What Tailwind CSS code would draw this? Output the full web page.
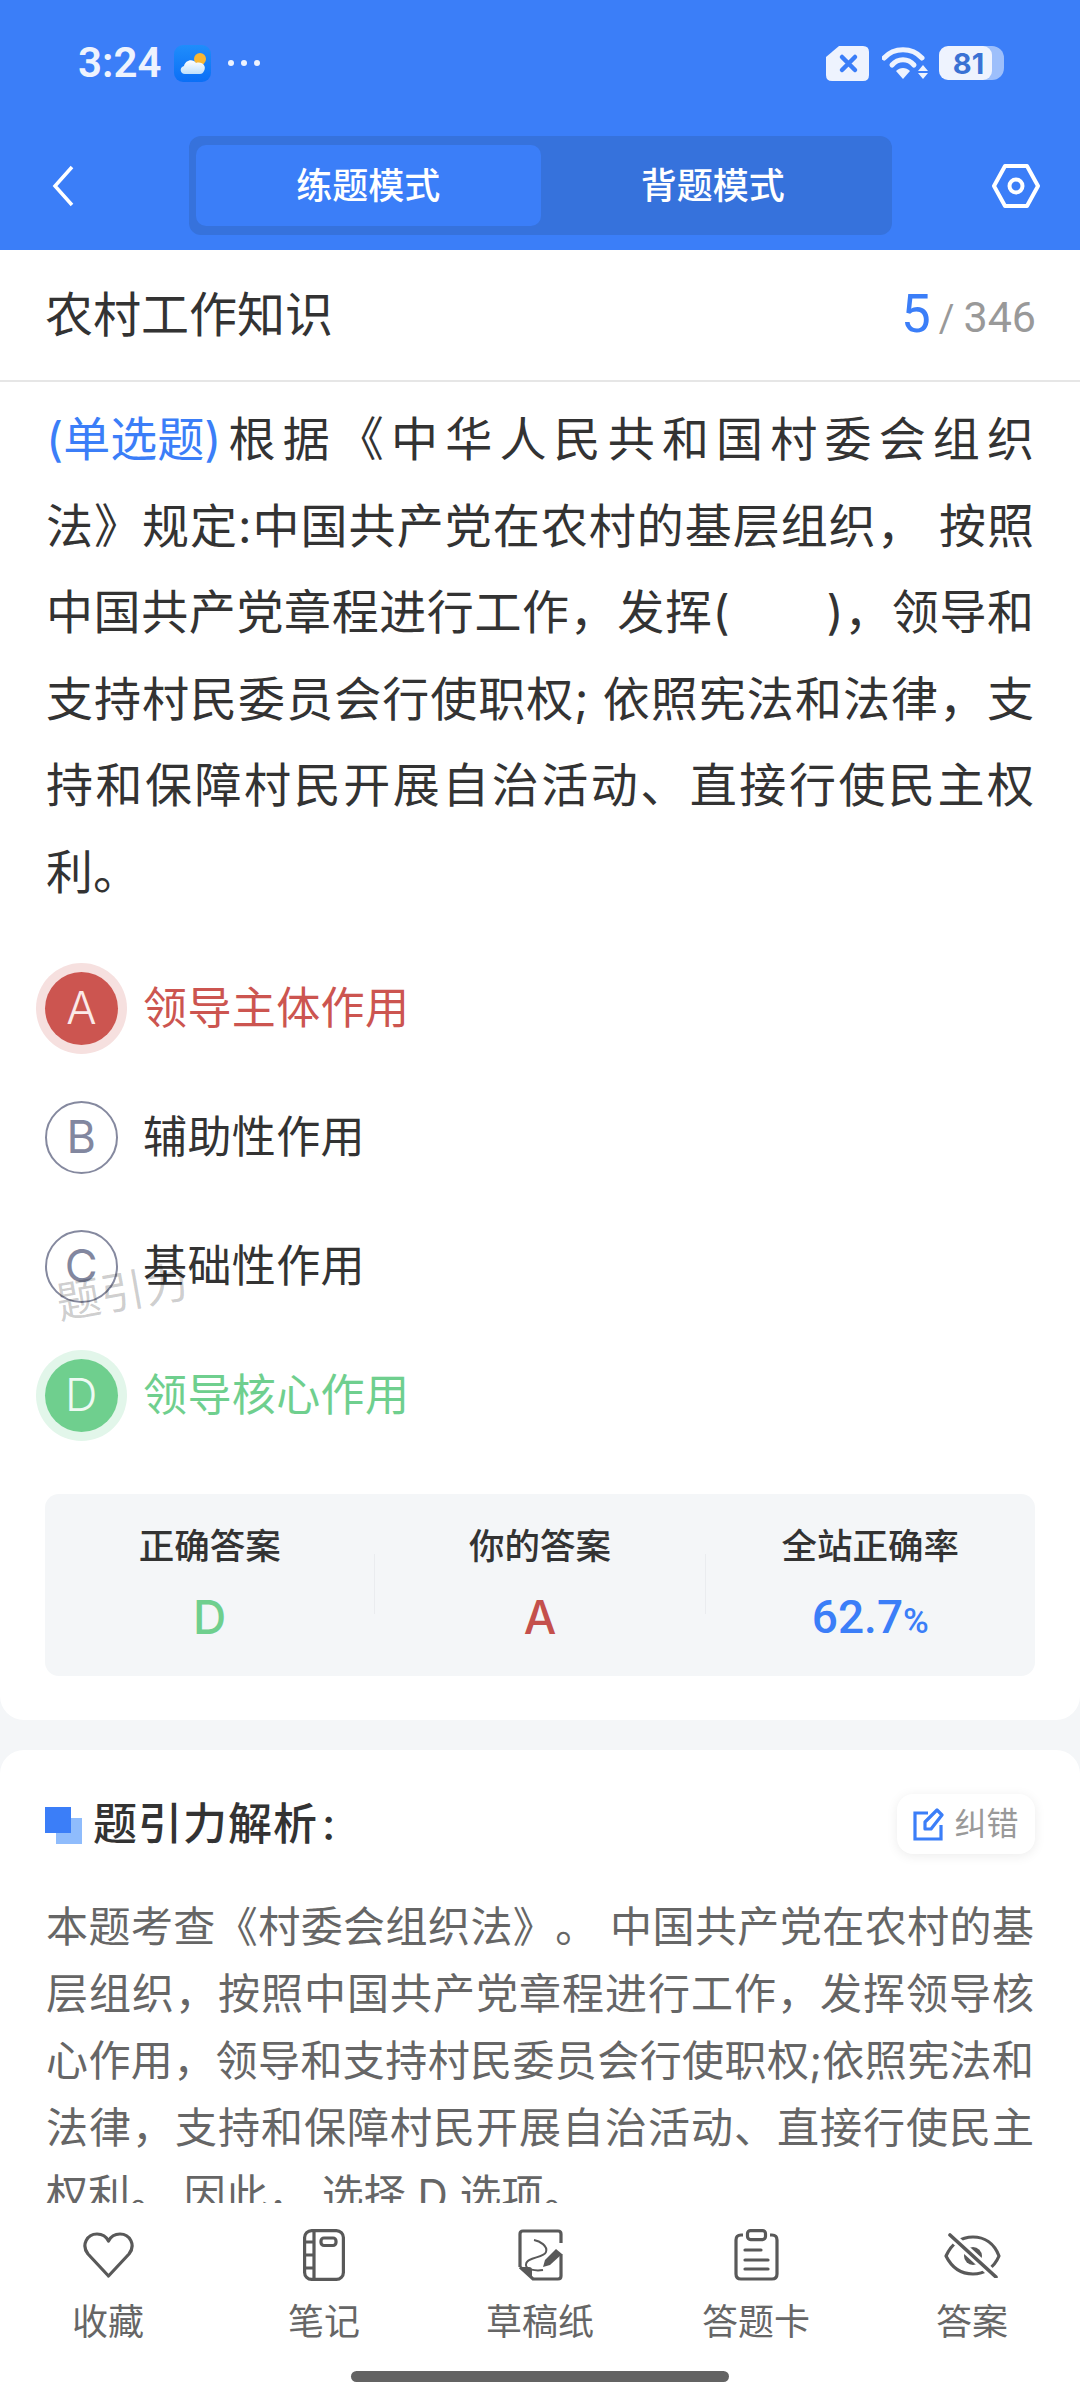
<!DOCTYPE html>
<html lang="zh-CN">
  <head>
    <meta charset="UTF-8" />
    <meta name="viewport" content="width=device-width, initial-scale=1.0" />
    <script src="https://cdn.jsdelivr.net/npm/@tailwindcss/browser@4"></script>
    <title>练题模式</title>
  </head>
  <body class="flex h-[2400px] w-[1080px] flex-col overflow-hidden bg-[#f4f6f8] text-[#333333] [font-family:Inter,'Noto_Sans_CJK_SC',sans-serif]">
    <!-- blue header -->
    <header class="h-[250px] shrink-0 bg-[#3b7ef8]">
      <div class="flex h-[126px] items-center pl-[78px] pr-[76px]">
        <span class="text-[42px] font-semibold leading-none text-[#eef3fe] [font-family:Roboto,sans-serif]">3:24</span>
        <svg class="ml-[13px]" width="37" height="37" viewBox="0 0 37 37">
          <defs>
            <linearGradient id="sky" x1="0" y1="0" x2="0" y2="1">
              <stop offset="0" stop-color="#1f8dfb" />
              <stop offset="1" stop-color="#0b6ff6" />
            </linearGradient>
            <linearGradient id="cloud" x1="0" y1="0" x2="0" y2="1">
              <stop offset="0" stop-color="#ffffff" />
              <stop offset="1" stop-color="#bfe0fb" />
            </linearGradient>
          </defs>
          <rect width="37" height="37" rx="9" fill="url(#sky)" />
          <circle cx="26" cy="14" r="6" fill="#f7b733" />
          <path d="M11 29 C6 29 5 22 10 21 C11 15 19 13 22 18 C28 16 33 21 30 26 C29 28 28 29 26 29 Z" fill="url(#cloud)" />
        </svg>
        <div class="ml-[17px] flex gap-[7px]">
          <span class="size-[6px] rounded-full bg-[#eef3fe]"></span>
          <span class="size-[6px] rounded-full bg-[#eef3fe]"></span>
          <span class="size-[6px] rounded-full bg-[#eef3fe]"></span>
        </div>
        <svg class="ml-auto" width="43" height="35" viewBox="0 0 43 35">
          <path d="M13 0 H37 Q43 0 43 6 V29 Q43 35 37 35 H6 Q0 35 0 29 V11 Z" fill="#eef3fe" />
          <path d="M16 11 L29 24 M29 11 L16 24" stroke="#3b7ef8" stroke-width="4.5" stroke-linecap="round" />
        </svg>
        <svg class="ml-[13px]" width="46" height="34" viewBox="0 0 46 34">
          <path d="M2 12 C12 1 30 1 40 12" fill="none" stroke="#eef3fe" stroke-width="5" stroke-linecap="round" />
          <path d="M10 19 C16 12 26 12 32 19" fill="none" stroke="#eef3fe" stroke-width="5" stroke-linecap="round" />
          <path d="M14 25 C18 21 24 21 28 25 L21 33 Z" fill="#eef3fe" />
          <path d="M41 19 L46 25 H36 Z M36 27 H46 L41 33 Z" fill="#eef3fe" />
        </svg>
        <div class="relative ml-[11px] flex h-[34px] w-[65px] items-center">
          <div class="absolute right-0 h-[34px] w-[24px] rounded-r-[12px] bg-[#9dbffb]"></div>
          <div class="relative flex h-[34px] w-[53px] items-center justify-center rounded-[9px] bg-[#eef3fe] pl-[6px] text-[29px] font-bold leading-none text-[#3a72d4]">81</div>
        </div>
      </div>
      <div class="mt-[10px] flex items-center pl-[52px] pr-[40px]">
        <svg width="22" height="42" viewBox="0 0 22 42">
          <path d="M20 2 L3 21 L20 40" fill="none" stroke="#ffffff" stroke-width="3.5" />
        </svg>
        <div class="ml-[115px] grid h-[99px] w-[703px] grid-cols-2 rounded-[12px] bg-[#3672dc] px-[7px] py-[9px] text-[36px] font-medium text-white">
          <div class="flex items-center justify-center rounded-[10px] bg-[#3b7ef8]">练题模式</div>
          <div class="flex items-center justify-center">背题模式</div>
        </div>
        <svg class="ml-auto" width="48" height="44" viewBox="0 0 48 44">
          <path d="M13 2 H35 L46 22 L35 42 H13 L2 22 Z" fill="none" stroke="#ffffff" stroke-width="4" stroke-linejoin="round" />
          <circle cx="24" cy="22" r="6.5" fill="none" stroke="#ffffff" stroke-width="4" />
        </svg>
      </div>
    </header>

    <!-- question card -->
    <section class="h-[1470px] shrink-0 rounded-b-[24px] bg-white">
      <div class="flex h-[132px] items-center justify-between border-b-2 border-[#e6e6e6] pl-[45px] pr-[44px]">
        <h1 class="text-[48px] font-normal">农村工作知识</h1>
        <div class="flex items-baseline text-[#999999] [font-family:Roboto,sans-serif]">
          <span class="text-[53px] text-[#3b7ef8]">5</span>
          <span class="ml-[8px] text-[38px]">/</span>
          <span class="ml-[9px] text-[43px]">346</span>
        </div>
      </div>

      <div class="px-[46px] pt-[14px] text-[47px] leading-[86.6px] [text-spacing-trim:space-all]">
        <p class="text-justify [text-align-last:justify]">
          <span class="inline-block text-[#3b7ef8]">(单选题)</span>根据《中华人民共和国村委会组织<br />
          法》规定:中国共产党在农村的基层组织， 按照<br />
          中国共产党章程进行工作，发挥(&nbsp;&nbsp;&nbsp;&nbsp;&nbsp;&nbsp;&nbsp;)，领导和<br />
          支持村民委员会行使职权; 依照宪法和法律，支<br />
          持和保障村民开展自治活动、直接行使民主权
        </p>
        <p>利。</p>
      </div>

      <ul class="mt-[28px] text-[44px] tracking-[0.4px]">
        <li class="flex h-[129px] items-center pl-[45px]">
          <span class="flex size-[73px] items-center justify-center rounded-full bg-[#cc5550] text-[45px] font-light text-[#fbe9e8] ring-[9px] ring-[#f6e0df]">A</span>
          <span class="ml-[25px] text-[#cc5550]">领导主体作用</span>
        </li>
        <li class="flex h-[129px] items-center pl-[45px]">
          <span class="flex size-[73px] items-center justify-center rounded-full border-2 border-[#85899f] text-[45px] font-normal text-[#82879f]">B</span>
          <span class="ml-[25px]">辅助性作用</span>
        </li>
        <li class="relative flex h-[129px] items-center pl-[45px]">
          <span class="flex size-[73px] items-center justify-center rounded-full border-2 border-[#85899f] text-[45px] font-normal text-[#82879f]">C</span>
          <span class="ml-[25px]">基础性作用</span>
          <span class="absolute left-[56px] top-[68px] -rotate-10 text-[44px] font-normal leading-none text-black/20">题引力</span>
        </li>
        <li class="flex h-[129px] items-center pl-[45px]">
          <span class="flex size-[73px] items-center justify-center rounded-full bg-[#6fcf8e] text-[45px] font-light text-[#eefaf2] ring-[9px] ring-[#e2f6ea]">D</span>
          <span class="ml-[25px] text-[#6fcf8e]">领导核心作用</span>
        </li>
      </ul>

      <div class="mx-[45px] mt-[34px] flex h-[182px] rounded-[14px] bg-[#f4f6f8]">
        <div class="flex-1 pt-[29px] text-center">
          <div class="text-[35.5px] font-medium leading-[48px]">正确答案</div>
          <div class="mt-[21px] text-[46px] font-medium leading-[50px] text-[#6fcf8e]">D</div>
        </div>
        <div class="mt-[60px] h-[60px] w-px bg-[#eaecef]"></div>
        <div class="flex-1 pt-[29px] text-center">
          <div class="text-[35.5px] font-medium leading-[48px]">你的答案</div>
          <div class="mt-[21px] text-[46px] font-medium leading-[50px] text-[#c4504c]">A</div>
        </div>
        <div class="mt-[60px] h-[60px] w-px bg-[#eaecef]"></div>
        <div class="flex-1 pt-[29px] text-center">
          <div class="text-[35.5px] font-medium leading-[48px]">全站正确率</div>
          <div class="mt-[21px] text-[46px] font-medium leading-[50px] text-[#3b7ef8] [font-family:Roboto,sans-serif]">62.7<span class="text-[35px]">%</span></div>
        </div>
      </div>
    </section>

    <!-- analysis card, cut off by the toolbar -->
    <section class="mt-[30px] h-[453px] shrink-0 overflow-hidden rounded-t-[24px] bg-white px-[46px] pt-[44px]">
      <div class="-mr-[1px] flex h-[60px] items-center justify-between">
        <div class="flex items-center">
          <div class="relative size-[37px] -translate-x-[1px] translate-y-[1px]">
            <div class="absolute bottom-0 right-0 size-[26px] bg-[#8fbcfc]"></div>
            <div class="absolute left-0 top-0 size-[26px] bg-[#3b7ef8]"></div>
          </div>
          <h2 class="ml-[10px] text-[44px] font-medium tracking-[1px]">题引力解析<span class="ml-[4px]">:</span></h2>
        </div>
        <div class="flex h-[60px] w-[138px] items-center justify-center rounded-[16px] bg-white shadow-[0_2px_12px_rgba(0,0,0,0.08)]">
          <svg width="31" height="33" viewBox="0 0 31 33">
            <path d="M15 5 H2 V31 H28 V17" fill="none" stroke="#3b7ef8" stroke-width="3.2" />
            <path d="M12 21 V14 L24 2 L29 7 L18 21 Z" fill="none" stroke="#3b7ef8" stroke-width="3.2" stroke-linejoin="round" />
          </svg>
          <span class="ml-[10px] text-[32px] text-[#999999]">纠错</span>
        </div>
      </div>
      <div class="mt-[39px] text-[42px] leading-[67px] text-[#666666] [text-spacing-trim:space-all]">
        <p class="text-justify [text-align-last:justify]">
          本题考查《村委会组织法》。 中国共产党在农村的基<br />
          层组织，按照中国共产党章程进行工作，发挥领导核<br />
          心作用，领导和支持村民委员会行使职权;依照宪法和<br />
          法律，支持和保障村民开展自治活动、直接行使民主
        </p>
        <p>权利。 因此， 选择 D 选项。</p>
      </div>
    </section>

    <!-- bottom toolbar -->
    <footer class="h-[197px] shrink-0 bg-white">
      <div class="grid grid-cols-5 pt-[25px] text-center text-[36px] leading-[48px] text-[#666666]">
        <div class="flex flex-col items-center">
          <div class="flex h-[54px] items-center">
            <svg width="51" height="46" viewBox="0 0 51 46">
              <path d="M25.5 44 L5 22 C-2 13 4 2 14 2 C19 2 23 4 25.5 9 C28 4 32 2 37 2 C47 2 53 13 46 22 Z" fill="none" stroke="#595959" stroke-width="3.2" stroke-linejoin="round" />
            </svg>
          </div>
          <span class="mt-[16px]">收藏</span>
        </div>
        <div class="flex flex-col items-center">
          <div class="flex h-[54px] items-center">
            <svg width="42" height="52" viewBox="0 0 42 52" fill="none" stroke="#595959" stroke-width="3.2">
              <rect x="1.6" y="1.6" width="38.8" height="48.8" rx="7" />
              <path d="M11 2 V50 M2 13 H11 M2 26 H11 M2 39 H11" />
              <rect x="18" y="9" width="15" height="7.5" rx="3" />
            </svg>
          </div>
          <span class="mt-[16px]">笔记</span>
        </div>
        <div class="flex flex-col items-center">
          <div class="flex h-[54px] items-center">
            <svg width="45" height="52" viewBox="0 0 45 52" fill="none" stroke="#595959" stroke-width="3.2">
              <path d="M2 38 V5 Q2 2 5 2 H40 Q43 2 43 5 V14 M43 25 V47 Q43 50 40 50 H15 L2 38" />
              <path d="M2 38 H11 Q14 38 14 41 V50 Z" fill="#595959" stroke="none" />
              <path d="M16 11 C22 12 30 17 28 23 C26 29 9 28 8 35 C7 41 18 42 25 41" stroke-width="2" />
              <path d="M25 38 L27 31 L38 20 L44 25 L32 36 Z" fill="#595959" stroke="none" />
            </svg>
          </div>
          <span class="mt-[16px]">草稿纸</span>
        </div>
        <div class="flex flex-col items-center">
          <div class="flex h-[54px] items-center">
            <svg width="45" height="52" viewBox="0 0 45 52" fill="none" stroke="#595959" stroke-width="3.2">
              <path d="M9 6 H7 Q2 6 2 11 V45 Q2 50 7 50 H38 Q43 50 43 45 V11 Q43 6 38 6 H36" />
              <rect x="13.5" y="1.6" width="18" height="9" rx="3" />
              <path d="M11 21 H27 M11 31 H34 M11 40 H34" stroke-linecap="round" />
            </svg>
          </div>
          <span class="mt-[16px]">答题卡</span>
        </div>
        <div class="flex flex-col items-center">
          <div class="flex h-[54px] items-center">
            <svg width="57" height="45" viewBox="0 0 57 45" fill="none" stroke="#595959" stroke-width="3.2">
              <path d="M2 23 C8 10 18 4 29 4 C40 4 50 10 55 23 C50 35 40 41 29 41 C18 41 8 35 2 23 Z" stroke-linejoin="round" />
              <circle cx="29" cy="23" r="9" fill="#595959" stroke="none" />
              <path d="M6 2 L52 44" stroke="#ffffff" stroke-width="9" />
              <path d="M6 2 L52 44" stroke-width="3.6" stroke-linecap="round" />
            </svg>
          </div>
          <span class="mt-[16px]">答案</span>
        </div>
      </div>
      <div class="mx-auto mt-[25px] h-[11px] w-[378px] rounded-full bg-[#636363]"></div>
    </footer>
  </body>
</html>
